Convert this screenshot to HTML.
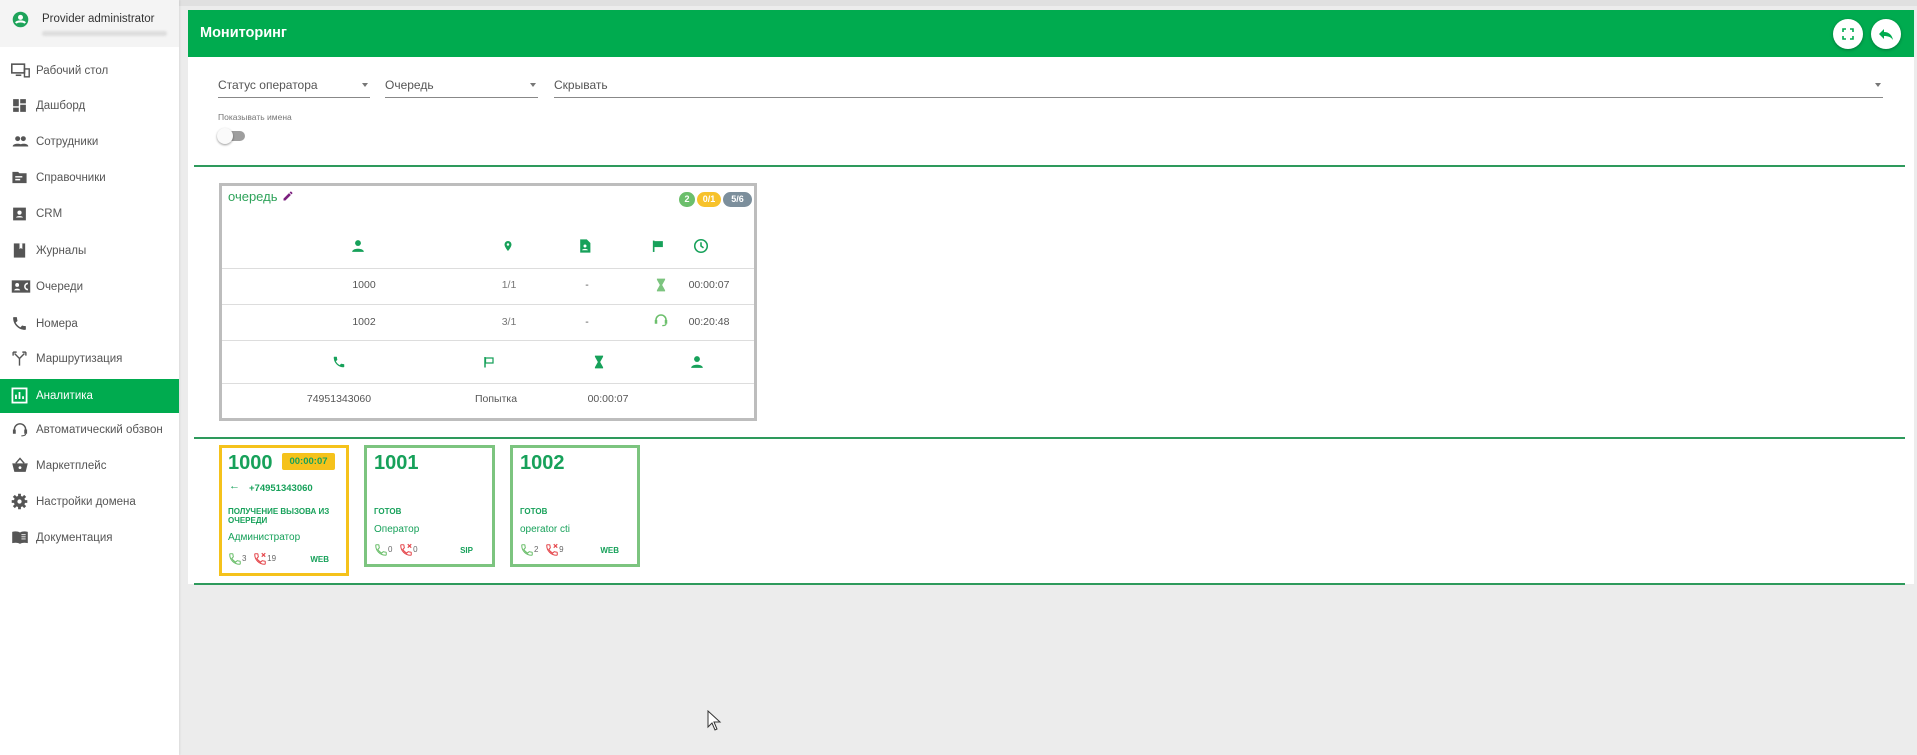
<!DOCTYPE html>
<html><head><meta charset="utf-8">
<style>
*{margin:0;padding:0;box-sizing:border-box}
body{width:1917px;height:755px;background:#ececec;font-family:"Liberation Sans",sans-serif;position:relative;overflow:hidden;color:#333}
.a{position:absolute}
.side{left:0;top:0;width:179px;height:755px;background:#fff;box-shadow:1px 0 2px rgba(0,0,0,.08)}
.user{left:0;top:0;width:179px;height:47px;background:#f4f4f4}
.mi{position:absolute;left:0;width:179px;height:34px;font-size:11.5px;color:#555;line-height:34px;padding-left:36px}
.mi svg{position:absolute;left:11px;top:8px}
.mi.act{background:#00ab4f;color:#fff}
.hdr{left:188px;top:10px;width:1726px;height:47px;background:#00ab4f;color:#fff;font-weight:bold;font-size:14.5px;line-height:47px;padding-left:12px}
.panel{left:188px;top:57px;width:1726px;height:527px;background:#fff}
.btn{width:30px;height:30px;border-radius:50%;background:#fff;box-shadow:0 1px 3px rgba(0,0,0,.3)}
.sel{border-bottom:1px solid #888;font-size:12px;color:#555;height:20px}
.caret{position:absolute;right:2px;top:5px;border-left:3.5px solid transparent;border-right:3.5px solid transparent;border-top:4px solid #777}
.gl{height:1.5px;background:#2e9a5c}
.hl{height:1px;background:#ddd;left:222px;width:532px}
.t{font-size:10.5px;color:#555;transform:translateX(-50%)}
.ic{transform:translate(-50%,-50%)}
.card{border:3px solid #7cc47f;background:#fff}
.num{font-weight:bold;font-size:20px;color:#17a15a}
.g{color:#17a15a}
</style></head><body>
<div class="a" style="left:0;top:0;width:1917px;height:6px;background:#e0e0e0"></div>
<div class="a side"></div>
<div class="a user"></div>
<svg class="a" style="left:12px;top:11px" width="17" height="17" viewBox="0 0 24 24"><circle cx="12" cy="12" r="11" fill="#1ea35a"/><circle cx="12" cy="9" r="3.5" fill="#fff"/><path d="M5.5 17c2-3 11-3 13 0" stroke="#fff" stroke-width="3" fill="none"/></svg>
<div class="a" style="left:42px;top:13px;font-size:11.5px;color:#333">Provider administrator</div>
<div class="a" style="left:42px;top:31px;width:125px;height:5px;background:#ddd;border-radius:3px;filter:blur(1px)"></div>

<div class="mi" style="top:54px"><svg width="19" height="17" viewBox="0 0 24 20"><rect x="1" y="2" width="16" height="11" fill="none" stroke="#555" stroke-width="2"/><rect x="17" y="8" width="6" height="10" fill="none" stroke="#555" stroke-width="1.8"/><path d="M6 16h7" stroke="#555" stroke-width="2"/></svg>Рабочий стол</div>
<div class="mi" style="top:89px"><svg width="17" height="17" viewBox="0 0 24 24"><path d="M3 3h8v10H3zM13 3h8v6h-8zM13 11h8v10h-8zM3 15h8v6H3z" fill="#555"/></svg>Дашборд</div>
<div class="mi" style="top:125px"><svg width="19" height="17" viewBox="0 0 24 24"><circle cx="8" cy="8" r="3.5" fill="#555"/><circle cx="16" cy="8" r="3.5" fill="#555"/><path d="M1 19c0-5 14-5 14 0zM10 19c0-5 13-5 13 0z" fill="#555"/></svg>Сотрудники</div>
<div class="mi" style="top:161px"><svg width="17" height="17" viewBox="0 0 24 24"><path d="M2 4h8l2 2h10v14H2z" fill="#555"/><path d="M6 11h10M6 15h7" stroke="#fff" stroke-width="2"/></svg>Справочники</div>
<div class="mi" style="top:197px"><svg width="17" height="18" viewBox="0 0 24 24"><rect x="3" y="3" width="18" height="18" fill="#555"/><circle cx="12" cy="10" r="3" fill="#fff"/><path d="M7 17c1-3 9-3 10 0" fill="#fff"/></svg>CRM</div>
<div class="mi" style="top:234px"><svg width="17" height="17" viewBox="0 0 24 24"><rect x="4" y="2" width="16" height="20" fill="#555"/><path d="M12 2v8l2-1.5 2 1.5V2" fill="#fff"/></svg>Журналы</div>
<div class="mi" style="top:270px"><svg width="20" height="17" viewBox="0 0 26 20"><rect x="1" y="2" width="24" height="16" fill="#555"/><circle cx="8" cy="8" r="2.5" fill="#fff"/><path d="M4 15c1-3 7-3 8 0z" fill="#fff"/><path d="M22 6a4 4 0 1 0 0 8" stroke="#fff" stroke-width="2" fill="none"/></svg>Очереди</div>
<div class="mi" style="top:307px"><svg width="17" height="17" viewBox="0 0 24 24"><path d="M6.6 10.8c1.4 2.8 3.8 5.1 6.6 6.6l2.2-2.2c.3-.3.7-.4 1-.2 1.1.4 2.3.6 3.6.6.6 0 1 .4 1 1V20c0 .6-.4 1-1 1C10.6 21 3 13.4 3 4c0-.6.4-1 1-1h3.5c.6 0 1 .4 1 1 0 1.3.2 2.5.6 3.6.1.3 0 .7-.2 1z" fill="#555"/></svg>Номера</div>
<div class="mi" style="top:342px"><svg width="17" height="17" viewBox="0 0 24 24"><path d="M12 22V12L5 5M12 12l7-7M3 3h5M3 3v5M21 3h-5M21 3v5" stroke="#555" stroke-width="2" fill="none"/></svg>Маршрутизация</div>
<div class="mi act" style="top:379px"><svg width="17" height="17" viewBox="0 0 24 24"><rect x="2" y="2" width="20" height="20" fill="none" stroke="#fff" stroke-width="2.5"/><path d="M7 17V11M12 17V7M17 17v-4" stroke="#fff" stroke-width="2.5"/></svg>Аналитика</div>
<div class="mi" style="top:413px"><svg width="18" height="17" viewBox="0 0 24 24"><path d="M4 16v-4a8 8 0 0 1 16 0v4" stroke="#555" stroke-width="2" fill="none"/><rect x="2" y="12" width="4" height="6" fill="#555"/><rect x="18" y="12" width="4" height="6" fill="#555"/><path d="M20 18c0 2-3 3-6 3" stroke="#555" stroke-width="1.6" fill="none"/></svg>Автоматический обзвон</div>
<div class="mi" style="top:449px"><svg width="18" height="17" viewBox="0 0 24 24"><path d="M1 9h22l-3 12H4z" fill="#555"/><path d="M6 9l6-7 6 7" stroke="#555" stroke-width="2" fill="none"/><circle cx="12" cy="15" r="2" fill="#fff"/></svg>Маркетплейс</div>
<div class="mi" style="top:485px"><svg width="17" height="17" viewBox="0 0 24 24"><circle cx="12" cy="12" r="8" fill="#555"/><path d="M12 1v22M1 12h22M4 4l16 16M20 4L4 20" stroke="#555" stroke-width="4"/><circle cx="12" cy="12" r="3" fill="#fff"/></svg>Настройки домена</div>
<div class="mi" style="top:521px"><svg width="18" height="17" viewBox="0 0 24 24"><path d="M1 4c4-1 8-1 11 1 3-2 7-2 11-1v16c-4-1-8-1-11 1-3-2-7-2-11-1z" fill="#555"/><path d="M14 8h6M14 11h6M14 14h6" stroke="#fff" stroke-width="1.3"/></svg>Документация</div>

<div class="a hdr">Мониторинг</div>
<div class="a btn" style="left:1833px;top:19px"><svg width="30" height="30" viewBox="0 0 30 30"><path d="M10 13v-3h3M17 10h3v3M20 17v3h-3M13 20h-3v-3" stroke="#00ab4f" stroke-width="1.6" fill="none"/></svg></div>
<div class="a btn" style="left:1871px;top:19px"><svg width="30" height="30" viewBox="0 0 30 30"><path d="M13 10l-5 5 5 5v-3c4 0 7 1 9 4-1-5-4-8-9-8z" fill="#00ab4f"/></svg></div>

<div class="a panel"></div>
<div class="a sel" style="left:218px;top:78px;width:152px">Статус оператора<span class="caret"></span></div>
<div class="a sel" style="left:385px;top:78px;width:153px">Очередь<span class="caret"></span></div>
<div class="a sel" style="left:554px;top:78px;width:1329px">Скрывать<span class="caret"></span></div>
<div class="a" style="left:218px;top:112px;font-size:8.5px;color:#777">Показывать имена</div>
<div class="a" style="left:220px;top:131px;width:25px;height:10px;border-radius:5px;background:#9e9e9e"></div>
<div class="a" style="left:217px;top:128px;width:16px;height:16px;border-radius:50%;background:#fafafa;box-shadow:0 1px 2px rgba(0,0,0,.4)"></div>
<div class="a gl" style="left:194px;top:165px;width:1711px"></div>

<div class="a" style="left:219px;top:183px;width:538px;height:238px;border:3px solid #bdbdbd;background:#fff"></div>
<div class="a" style="left:228px;top:189px;font-size:13px;color:#2ea35a">очередь</div>
<svg class="a" style="left:282px;top:190px" width="12" height="12" viewBox="0 0 24 24"><path d="M3 17.2V21h3.8L17.8 10l-3.8-3.8zM20.7 7c.4-.4.4-1 0-1.4l-2.3-2.3c-.4-.4-1-.4-1.4 0l-1.8 1.8 3.7 3.7z" fill="#7b1f7e"/></svg>
<div class="a" style="left:679px;top:192px;width:16px;height:15px;border-radius:8px;background:#6cbf6c;color:#fff;font-size:9px;font-weight:bold;text-align:center;line-height:15px">2</div>
<div class="a" style="left:697px;top:192px;width:24px;height:15px;border-radius:8px;background:#f7c22b;color:#fff;font-size:9px;font-weight:bold;text-align:center;line-height:15px">0/1</div>
<div class="a" style="left:723px;top:192px;width:29px;height:15px;border-radius:8px;background:#7c8f9c;color:#fff;font-size:9px;font-weight:bold;text-align:center;line-height:15px">5/6</div>

<svg class="a ic" style="left:358px;top:246px" width="14" height="14" viewBox="0 0 24 24"><circle cx="12" cy="7" r="5" fill="#17a15a"/><path d="M2 22c0-7 20-7 20 0z" fill="#17a15a"/></svg>
<svg class="a ic" style="left:508px;top:246px" width="12" height="15" viewBox="0 0 24 24"><path d="M12 2a7 7 0 0 0-7 7c0 5 7 13 7 13s7-8 7-13a7 7 0 0 0-7-7zm0 9.5a2.5 2.5 0 1 1 0-5 2.5 2.5 0 0 1 0 5z" fill="#17a15a"/></svg>
<svg class="a ic" style="left:585px;top:246px" width="12" height="15" viewBox="0 0 20 24"><path d="M2 1h11l6 6v16H2z" fill="#17a15a"/><circle cx="10" cy="12" r="2.5" fill="#fff"/><path d="M5 19c1-3 9-3 10 0z" fill="#fff"/></svg>
<svg class="a ic" style="left:658px;top:246px" width="13" height="14" viewBox="0 0 24 24"><path d="M4 2v21" stroke="#17a15a" stroke-width="3"/><path d="M5 3h16v11H5z" fill="#17a15a"/></svg>
<svg class="a ic" style="left:701px;top:246px" width="15" height="15" viewBox="0 0 24 24"><circle cx="12" cy="12" r="10" fill="none" stroke="#17a15a" stroke-width="2.5"/><path d="M12 6v6l4 3" stroke="#17a15a" stroke-width="2.5" fill="none"/></svg>
<div class="a hl" style="top:268px"></div>
<div class="a t" style="left:364px;top:279px">1000</div>
<div class="a t" style="left:509px;top:279px;color:#777">1/1</div>
<div class="a t" style="left:587px;top:279px">-</div>
<svg class="a ic" style="left:661px;top:285px" width="10" height="14" viewBox="0 0 16 24"><path d="M1 1h14v2l-5 9 5 9v2H1v-2l5-9-5-9z" fill="#7cc47f"/></svg>
<div class="a t" style="left:709px;top:279px">00:00:07</div>
<div class="a hl" style="top:304px"></div>
<div class="a t" style="left:364px;top:316px">1002</div>
<div class="a t" style="left:509px;top:316px;color:#777">3/1</div>
<div class="a t" style="left:587px;top:316px">-</div>
<svg class="a ic" style="left:661px;top:320px" width="15" height="15" viewBox="0 0 24 24"><path d="M4 16v-4a8 8 0 0 1 16 0v4" stroke="#6cbf6c" stroke-width="2.5" fill="none"/><rect x="2" y="12" width="4" height="6" fill="#6cbf6c"/><rect x="18" y="12" width="4" height="6" fill="#6cbf6c"/><path d="M20 18c0 2-3 3-6 3" stroke="#6cbf6c" stroke-width="2" fill="none"/></svg>
<div class="a t" style="left:709px;top:316px">00:20:48</div>
<div class="a hl" style="top:340px"></div>
<svg class="a ic" style="left:339px;top:362px" width="14" height="14" viewBox="0 0 24 24"><path d="M6.6 10.8c1.4 2.8 3.8 5.1 6.6 6.6l2.2-2.2c.3-.3.7-.4 1-.2 1.1.4 2.3.6 3.6.6.6 0 1 .4 1 1V20c0 .6-.4 1-1 1C10.6 21 3 13.4 3 4c0-.6.4-1 1-1h3.5c.6 0 1 .4 1 1 0 1.3.2 2.5.6 3.6.1.3 0 .7-.2 1z" fill="#17a15a"/></svg>
<svg class="a ic" style="left:489px;top:362px" width="12" height="14" viewBox="0 0 24 24"><path d="M4 2v21" stroke="#17a15a" stroke-width="3"/><path d="M5 4h15v10H5z" fill="none" stroke="#17a15a" stroke-width="2.5"/></svg>
<svg class="a ic" style="left:599px;top:362px" width="10" height="14" viewBox="0 0 16 24"><path d="M1 1h14v2l-5 9 5 9v2H1v-2l5-9-5-9z" fill="#17a15a"/></svg>
<svg class="a ic" style="left:697px;top:362px" width="14" height="14" viewBox="0 0 24 24"><circle cx="12" cy="7" r="5" fill="#17a15a"/><path d="M2 22c0-7 20-7 20 0z" fill="#17a15a"/></svg>
<div class="a hl" style="top:383px"></div>
<div class="a t" style="left:339px;top:393px">74951343060</div>
<div class="a t" style="left:496px;top:393px">Попытка</div>
<div class="a t" style="left:608px;top:393px">00:00:07</div>

<div class="a gl" style="left:194px;top:437px;width:1711px"></div>

<div class="a card" style="left:219px;top:445px;width:130px;height:131px;border-color:#f5c21b"></div>
<div class="a num" style="left:228px;top:452px">1000</div>
<div class="a" style="left:282px;top:453px;width:53px;height:17px;background:#f5c21b;border-radius:2px;font-size:9.5px;font-weight:bold;color:#17a15a;text-align:center;line-height:17px">00:00:07</div>
<div class="a g" style="left:229px;top:480px;font-size:11px">←</div>
<div class="a g" style="left:249px;top:483px;font-size:9.5px;font-weight:bold">+74951343060</div>
<div class="a g" style="left:228px;top:507px;font-size:8px;font-weight:bold;line-height:9px">ПОЛУЧЕНИЕ ВЫЗОВА ИЗ<br>ОЧЕРЕДИ</div>
<div class="a g" style="left:228px;top:532px;font-size:10px">Администратор</div>

<div class="a card" style="left:364px;top:445px;width:131px;height:122px"></div>
<div class="a num" style="left:374px;top:452px">1001</div>
<div class="a g" style="left:374px;top:507px;font-size:8px;font-weight:bold">ГОТОВ</div>
<div class="a g" style="left:374px;top:524px;font-size:10px">Оператор</div>

<div class="a card" style="left:510px;top:445px;width:130px;height:122px"></div>
<div class="a num" style="left:520px;top:452px">1002</div>
<div class="a g" style="left:520px;top:507px;font-size:8px;font-weight:bold">ГОТОВ</div>
<div class="a g" style="left:520px;top:524px;font-size:10px">operator cti</div>

<div class="a" style="left:228px;top:552px;font-size:8px;color:#666;width:115px"><svg width="14" height="14" viewBox="0 0 24 24" style="vertical-align:middle"><path d="M6.6 10.8c1.4 2.8 3.8 5.1 6.6 6.6l2.2-2.2c.3-.3.7-.4 1-.2 1.1.4 2.3.6 3.6.6.6 0 1 .4 1 1V20c0 .6-.4 1-1 1C10.6 21 3 13.4 3 4c0-.6.4-1 1-1h3.5c.6 0 1 .4 1 1 0 1.3.2 2.5.6 3.6.1.3 0 .7-.2 1z" fill="none" stroke="#6cbf6c" stroke-width="1.8"/></svg>3 &nbsp;&nbsp;<svg width="14" height="14" viewBox="0 0 24 24" style="vertical-align:middle"><path d="M6.6 10.8c1.4 2.8 3.8 5.1 6.6 6.6l2.2-2.2c.3-.3.7-.4 1-.2 1.1.4 2.3.6 3.6.6.6 0 1 .4 1 1V20c0 .6-.4 1-1 1C10.6 21 3 13.4 3 4c0-.6.4-1 1-1h3.5c.6 0 1 .4 1 1 0 1.3.2 2.5.6 3.6.1.3 0 .7-.2 1z" fill="none" stroke="#e5484d" stroke-width="1.8"/><path d="M15 2l6 6M21 2l-6 6" stroke="#e5484d" stroke-width="2"/></svg>19<span class="g" style="position:absolute;right:14px;top:3px;font-weight:bold">WEB</span></div>
<div class="a" style="left:374px;top:543px;font-size:8px;color:#666;width:115px"><svg width="14" height="14" viewBox="0 0 24 24" style="vertical-align:middle"><path d="M6.6 10.8c1.4 2.8 3.8 5.1 6.6 6.6l2.2-2.2c.3-.3.7-.4 1-.2 1.1.4 2.3.6 3.6.6.6 0 1 .4 1 1V20c0 .6-.4 1-1 1C10.6 21 3 13.4 3 4c0-.6.4-1 1-1h3.5c.6 0 1 .4 1 1 0 1.3.2 2.5.6 3.6.1.3 0 .7-.2 1z" fill="none" stroke="#6cbf6c" stroke-width="1.8"/></svg>0 &nbsp;&nbsp;<svg width="14" height="14" viewBox="0 0 24 24" style="vertical-align:middle"><path d="M6.6 10.8c1.4 2.8 3.8 5.1 6.6 6.6l2.2-2.2c.3-.3.7-.4 1-.2 1.1.4 2.3.6 3.6.6.6 0 1 .4 1 1V20c0 .6-.4 1-1 1C10.6 21 3 13.4 3 4c0-.6.4-1 1-1h3.5c.6 0 1 .4 1 1 0 1.3.2 2.5.6 3.6.1.3 0 .7-.2 1z" fill="none" stroke="#e5484d" stroke-width="1.8"/><path d="M15 2l6 6M21 2l-6 6" stroke="#e5484d" stroke-width="2"/></svg>0<span class="g" style="position:absolute;right:16px;top:3px;font-weight:bold">SIP</span></div>
<div class="a" style="left:520px;top:543px;font-size:8px;color:#666;width:115px"><svg width="14" height="14" viewBox="0 0 24 24" style="vertical-align:middle"><path d="M6.6 10.8c1.4 2.8 3.8 5.1 6.6 6.6l2.2-2.2c.3-.3.7-.4 1-.2 1.1.4 2.3.6 3.6.6.6 0 1 .4 1 1V20c0 .6-.4 1-1 1C10.6 21 3 13.4 3 4c0-.6.4-1 1-1h3.5c.6 0 1 .4 1 1 0 1.3.2 2.5.6 3.6.1.3 0 .7-.2 1z" fill="none" stroke="#6cbf6c" stroke-width="1.8"/></svg>2 &nbsp;&nbsp;<svg width="14" height="14" viewBox="0 0 24 24" style="vertical-align:middle"><path d="M6.6 10.8c1.4 2.8 3.8 5.1 6.6 6.6l2.2-2.2c.3-.3.7-.4 1-.2 1.1.4 2.3.6 3.6.6.6 0 1 .4 1 1V20c0 .6-.4 1-1 1C10.6 21 3 13.4 3 4c0-.6.4-1 1-1h3.5c.6 0 1 .4 1 1 0 1.3.2 2.5.6 3.6.1.3 0 .7-.2 1z" fill="none" stroke="#e5484d" stroke-width="1.8"/><path d="M15 2l6 6M21 2l-6 6" stroke="#e5484d" stroke-width="2"/></svg>9<span class="g" style="position:absolute;right:16px;top:3px;font-weight:bold">WEB</span></div>

<div class="a gl" style="left:194px;top:583px;width:1711px"></div>

<svg class="a" style="left:707px;top:710px" width="16" height="22" viewBox="0 0 16 22"><path d="M1 1v16l4-4 3 7 2-1-3-7h6z" fill="#fff" stroke="#333" stroke-width="1"/></svg>
</body></html>
